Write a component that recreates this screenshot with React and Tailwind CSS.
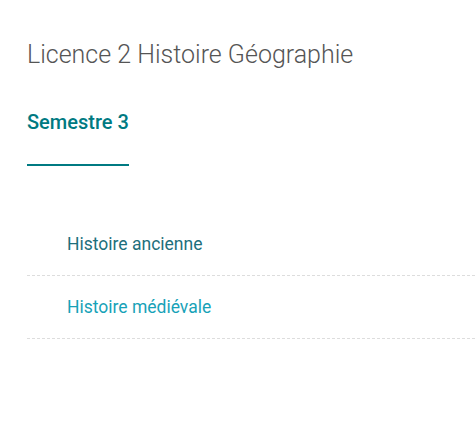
export default function App() {
  return (
    <div className="min-h-[441px] bg-white pl-[27px] pt-[39px]" style={{ fontFamily: "Roboto, 'Noto Sans', sans-serif" }}>
      <h1 className="text-[25px] leading-[32px] font-light text-[#555555]">Licence 2 Histoire Géographie</h1>
      <div className="mt-[39px] inline-block">
        <div className="text-[20px] leading-[24px] font-medium text-[#007a82]">Semestre 3</div>
        <div className="mt-[30px] h-[2px] w-[102px] bg-[#007a82]"></div>
      </div>
      <ul className="mt-[47px]">
        <li className="border-b border-dashed border-[#dddddd] pl-[40px] h-[63px] flex items-center">
          <span className="text-[17.5px] text-[#1d6f7c]">Histoire ancienne</span>
        </li>
        <li className="border-b border-dashed border-[#dddddd] pl-[40px] h-[63px] flex items-center">
          <span className="text-[17.5px] text-[#17a2b8]">Histoire médiévale</span>
        </li>
      </ul>
    </div>
  );
}
